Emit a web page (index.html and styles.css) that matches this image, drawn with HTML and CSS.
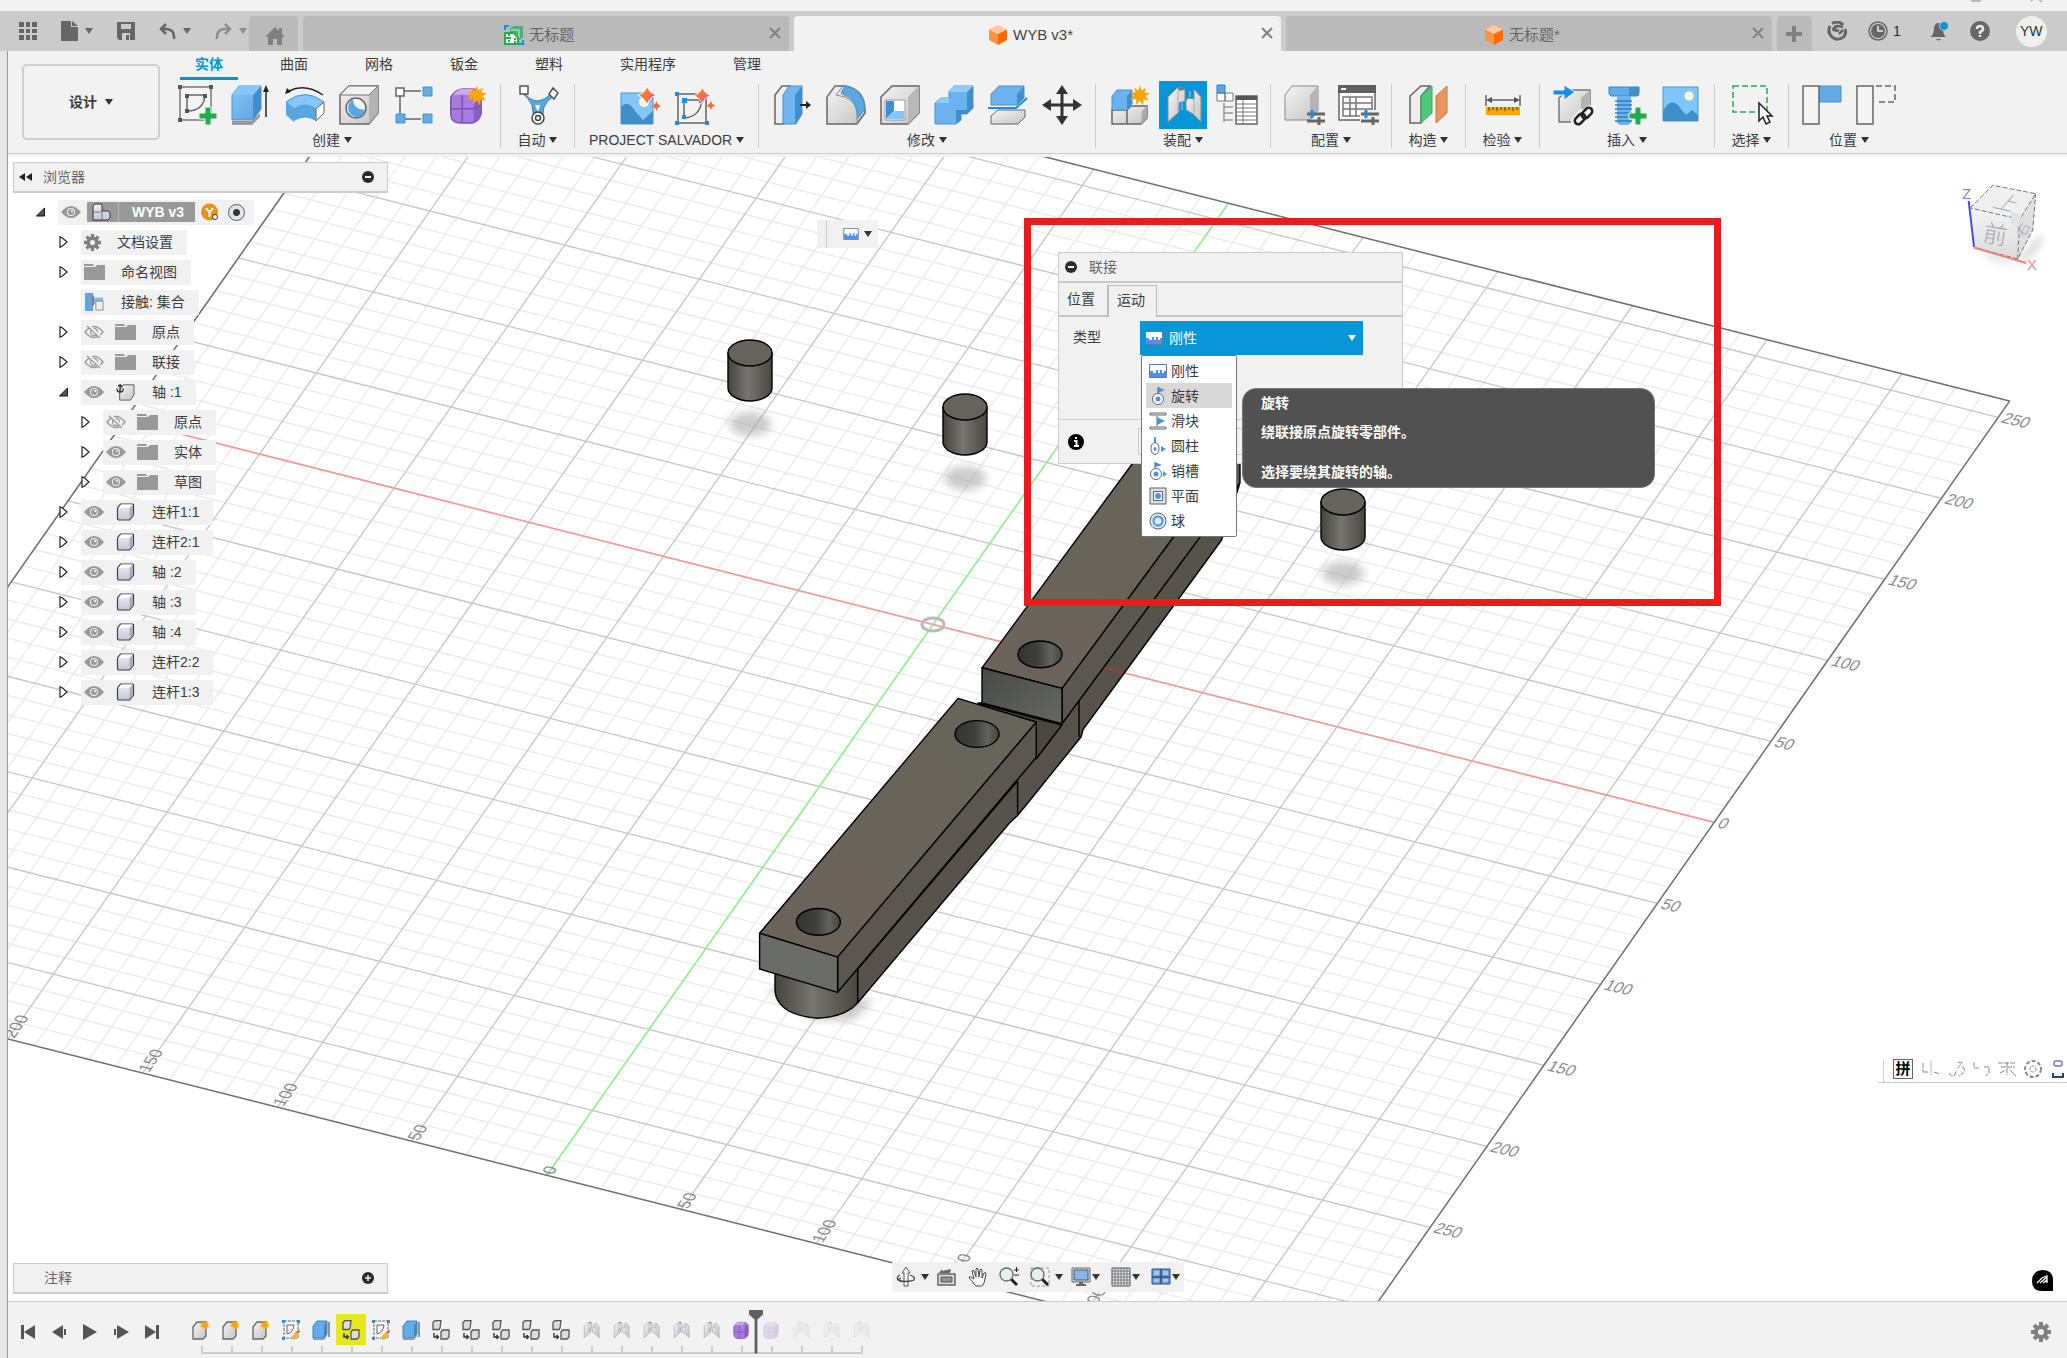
FILE: index.html
```html
<!DOCTYPE html>
<html lang="zh-CN">
<head>
  <meta charset="UTF-8">
  <meta name="viewport" content="width=device-width, initial-scale=1.0">
  <title>WYB v3</title>
  <link rel="stylesheet" href="styles.css">
</head>
<body>

<!-- shared icons -->
<svg class="defs" aria-hidden="true">
  <defs>
    <linearGradient id="gGray" x1="0" y1="0" x2="1" y2="1"><stop offset="0" stop-color="#f4f4f4"/><stop offset="1" stop-color="#c4c4c4"/></linearGradient>
    <linearGradient id="gBlue" x1="0" y1="0" x2="1" y2="1"><stop offset="0" stop-color="#86c6fa"/><stop offset="1" stop-color="#5aa3dd"/></linearGradient>
    <linearGradient id="gStar" x1="0" y1="0" x2="1" y2="1"><stop offset="0" stop-color="#ffa21a"/><stop offset=".5" stop-color="#ff6f42"/><stop offset="1" stop-color="#ff3ec8"/></linearGradient>
    <linearGradient id="gPart" x1="0" y1="0" x2="0" y2="1"><stop offset="0" stop-color="#eef0f5"/><stop offset="1" stop-color="#c3c7d6"/></linearGradient>
    <linearGradient id="gMetal" x1="0" y1="0" x2="1" y2="0"><stop offset="0" stop-color="#45433c"/><stop offset=".45" stop-color="#75766f"/><stop offset="1" stop-color="#4a473e"/></linearGradient>
    <linearGradient id="gHole" x1="0" y1="0" x2="1" y2="0"><stop offset="0" stop-color="#35352f"/><stop offset=".45" stop-color="#3f413c"/><stop offset=".75" stop-color="#62635d"/><stop offset="1" stop-color="#44423b"/></linearGradient>
    <linearGradient id="gTop" x1="0" y1="1" x2="1" y2="0"><stop offset="0" stop-color="#6b635a"/><stop offset="1" stop-color="#66645a"/></linearGradient>
    <linearGradient id="gEnd" x1="0" y1="0" x2="1" y2="1"><stop offset="0" stop-color="#484a46"/><stop offset="1" stop-color="#656762"/></linearGradient>
    <linearGradient id="gCube" x1="0" y1="0" x2="0" y2="1"><stop offset="0" stop-color="#f4f4f4"/><stop offset="1" stop-color="#dadada"/></linearGradient>
    <filter id="soft" x="-50%" y="-50%" width="200%" height="200%"><feGaussianBlur stdDeviation="4"/></filter>
  </defs>

  <symbol id="i-cube" viewBox="0 0 20 20"><path d="M10 0l9 4.500-9 4.500-9-4.500z" fill="#ffc9a0"/><path d="M1 4.500l9 4.500v11l-9-5z" fill="#ff9440"/><path d="M19 4.500L10 9v11l9-5z" fill="#ff6a00"/></symbol>
  <symbol id="i-sheet" viewBox="0 0 20 20"><path d="M1 5V1h4M19 15v4h-4" fill="none" stroke="#1a8de8" stroke-width="2"/><path d="M6 3l4-2h9v12l-4 2H6z" fill="#4fae74"/><path d="M7 5h8v8" fill="none" stroke="#8bd3a5" stroke-width="2"/><path d="M1 8h9l4 5v6H1z" fill="#fff" stroke="#22ad55" stroke-width="2"/><path d="M5 9v8M2 13h6M11 13v5" stroke="#22ad55" stroke-width="2" stroke-dasharray="2 1"/></symbol>
  <symbol id="i-eye" viewBox="0 0 20 14"><path d="M0 7Q10-5 20 7 10 19 0 7z" fill="#999"/><circle cx="10" cy="7" r="4" fill="#f1f1f1"/><circle cx="10" cy="7" r="3" fill="#999"/><circle cx="11" cy="6" r="1" fill="#fff"/></symbol>
  <symbol id="i-eyeoff" viewBox="0 0 20 14"><path d="M1 7Q10-4 19 7 10 18 1 7z" fill="none" stroke="#999" stroke-width="1.300"/><circle cx="10" cy="7" r="3.500" fill="none" stroke="#999" stroke-width="1.300"/><path d="M4 0l13 13" stroke="#f1f1f1" stroke-width="3"/><path d="M3 1l13 12" stroke="#999" stroke-width="1.300"/></symbol>
  <symbol id="i-folder" viewBox="0 0 21 16"><path d="M0 0h9l1 2H0zM0 3h11l2-2h8v15H0z" fill="#999"/></symbol>
  <symbol id="i-part" viewBox="0 0 18 18"><path d="M1 6q0-2 1.500-3L4 1h12l1 .6V12l-4 5H2l-1-1z" fill="url(#gPart)" stroke="#3c4150" stroke-width="1.200"/><path d="M2 5l3-3.500h11L13 5z" fill="#fdfdfe"/><path d="M13 5l3.500-3.500V12L13 16z" fill="#a9adbd"/></symbol>
  <symbol id="i-open" viewBox="0 0 10 10"><path d="M9.500.5v9h-9z" fill="#555" stroke="#000"/></symbol>
  <symbol id="i-closed" viewBox="0 0 9 12"><path d="M1 .8v10.400L3.500 10 8 6 3.500 2z" fill="#fff" stroke="#222" stroke-width="1.200"/></symbol>
  <symbol id="i-gear" viewBox="0 0 20 20"><circle cx="10" cy="10" r="5" fill="none" stroke="#808080" stroke-width="4"/><path d="M10 0v4M10 16v4M0 10h4M16 10h4M3 3l3 3M14 14l3 3M17 3l-3 3M6 14l-3 3" stroke="#808080" stroke-width="4"/></symbol>
  <symbol id="i-minus" viewBox="0 0 12 12"><circle cx="6" cy="6" r="6" fill="#2b2b2b"/><path d="M3 6h6" stroke="#f1f1f1" stroke-width="2"/></symbol>
  <symbol id="i-plus" viewBox="0 0 12 12"><circle cx="6" cy="6" r="6" fill="#2b2b2b"/><path d="M3 6h6M6 3v6" stroke="#f1f1f1" stroke-width="1.500"/></symbol>
  <symbol id="i-burst" viewBox="0 0 20 20"><path d="M10 0l1.800 5L16 2l-1.600 5L20 8l-4.500 2.500L19 15l-5.300-1L13 20l-3-5-4 4 .3-5.500L0 14l4-4-4-3 5.600-.2L4 2l4.400 3z" fill="#f9a602"/></symbol>
  <symbol id="i-spark" viewBox="0 0 30 30"><path d="M13 0q1 8 10 11-9 3-10 11Q11 14 3 11 12 8 13 0z" fill="url(#gStar)" stroke="#fff"/><path d="M23 17q.5 4 5 5.500-4.500 1.500-5 5.500-1-4-5-5.500 4-1.500 5-5.500z" fill="#ff6a3a"/></symbol>
  <symbol id="i-rigid" viewBox="0 0 18 14"><path d="M.5.500h17v13H.5z" fill="#f7f9fc" stroke="#6b7788"/><path d="M1 7h3v2h3V6h2v3h2V6h2v3h2V7h2v6H1z" fill="#4a90f5"/></symbol>
  <symbol id="i-joint" viewBox="0 0 40 40"><path d="M5 12L14 3q6-2 8 2v11l-6 2v9L5 37z" fill="url(#gGray)" stroke="#8a8a8a"/><path d="M15 5v22" stroke="#aaa"/><path d="M38 12l-7-8v10l-6-1-2 3v9l7 4 8 8z" fill="url(#gGray)" stroke="#8a8a8a"/><path d="M31 14v15" stroke="#aaa"/><path d="M19 18v7M27 6v6" stroke="#58b2f0" stroke-width="2"/><ellipse cx="18" cy="4" rx="3" ry="1.500" fill="#777"/></symbol>
  <symbol id="i-copy" viewBox="0 0 18 20"><path d="M1 2.500L3 .7h6L8 8 7 9.500H1zM9 12l1.500-2H17v7l-2 2H9z" fill="#ddd" stroke="#555" stroke-width="1.300"/><path d="M2 13v4h4M4.500 15l2 2-2 2" fill="none" stroke="#333" stroke-width="1.400"/></symbol>
  <symbol id="i-box" viewBox="0 0 18 20"><path d="M1 7l4-5h9v14l-3 3H1z" fill="url(#gGray)" stroke="#666" stroke-width="1.300"/><use href="#i-burst" x="8" y="0" width="10" height="10"/></symbol>
  <symbol id="i-tsketch" viewBox="0 0 18 20"><path d="M2 1h14v17H2z" fill="#f6f6f6" stroke="#666" stroke-dasharray="3 1"/><path d="M5 5h7q-1 8-7 9z" fill="none" stroke="#666"/><path d="M0 0h3v3H0zM15 0h3v3h-3zM0 17h3v3H0z" fill="#2b8fe0"/><path d="M10 19l6-7" stroke="#f7b13a" stroke-width="3.500"/><path d="M16 11l1 1" stroke="#e02020" stroke-width="3"/></symbol>
  <symbol id="i-textrude" viewBox="0 0 18 20"><path d="M1 6l4-5h10v13l-3 4H1z" fill="#62abe6" stroke="#3c86c2"/><path d="M12 6l3-5v13l-3 4z" fill="#3a88c6"/><path d="M1 18h11l3-4v2l-3 4H1z" fill="#999"/><path d="M17 17V2" stroke="#333"/></symbol>
  <symbol id="i-form" viewBox="0 0 40 40"><path d="M4 12Q8 4 16 3h12q9 2 8 12v14q-2 8-9 10H13Q4 38 4 30z" fill="#a97be0" stroke="#7b4fb8" stroke-width="1.500"/><path d="M28 12l8-4v20q-2 8-8 10z" fill="#8a5cc8"/><path d="M6 10Q10 4 16 3h12l-4 7q-9-2-18 0z" fill="#cda8f5"/><path d="M16 10v28M4 24h24l8-4" fill="none" stroke="#7b4fb8" stroke-width="1.500"/></symbol>
</svg>

<div class="titlebar">
  <svg width="2067" height="11" viewBox="0 0 2067 11" aria-hidden="true"><path d="M1972 0v1h8V0M2031 1l3-2M2038-1l4 3" fill="none" stroke="#888"/></svg>
</div>

<header class="tabbar">
  <div class="quick">
    <button class="flat" aria-label="数据面板"><svg width="18" height="18" viewBox="0 0 18 18"><path d="M0 0h5v5H0zM7 0h4v5H7zM13 0h5v5h-5zM0 7h5v4H0zM7 7h4v4H7zM13 7h5v4h-5zM0 13h5v5H0zM7 13h4v5H7zM13 13h5v5h-5z" fill="#666"/></svg></button>
    <button class="flat wide" aria-label="文件"><svg width="17" height="20" viewBox="0 0 17 20"><path d="M0 0h10v6h7v14H0z" fill="#666"/><path d="M11 0l6 5h-6z" fill="#666"/></svg><i class="caret"></i></button>
    <button class="flat" aria-label="保存"><svg width="18" height="18" viewBox="0 0 18 18"><path d="M0 0h18v18H2l-2-2z" fill="#666"/><path d="M4 2h10v5H4zM5 11h8v7H5z" fill="#ccc"/><path d="M9 13h3v5H9z" fill="#666"/></svg></button>
    <button class="flat wide" aria-label="撤消"><svg width="17" height="17" viewBox="0 0 17 17"><path d="M7 1L2 6l5 5M2 6h6q8 1 7 10" fill="none" stroke="#666" stroke-width="2.500"/></svg><i class="caret"></i></button>
    <button class="flat wide faded" aria-label="重做"><svg width="17" height="17" viewBox="0 0 17 17"><path d="M10 1l5 5-5 5M15 6H9Q1 7 2 16" fill="none" stroke="#666" stroke-width="2.500"/></svg><i class="caret"></i></button>
  </div>
  <button class="tab home" aria-label="主页"><svg width="20" height="18" viewBox="0 0 20 18"><path d="M10 0l4 4V1h3v6l3 3h-3v8h-5v-6H8v6H3v-8H0z" fill="#808080"/></svg></button>
  <div class="tab doc"><svg width="20" height="20"><use href="#i-sheet"/></svg><span>无标题</span><button class="close" aria-label="关闭"><svg width="12" height="12" viewBox="0 0 12 12"><path d="M1 1l10 10M11 1L1 11" stroke="#808080" stroke-width="2"/></svg></button></div>
  <div class="tab doc active"><svg width="20" height="20"><use href="#i-cube"/></svg><span>WYB v3*</span><button class="close" aria-label="关闭"><svg width="12" height="12" viewBox="0 0 12 12"><path d="M1 1l10 10M11 1L1 11" stroke="#808080" stroke-width="2"/></svg></button></div>
  <div class="tab doc"><svg width="20" height="20"><use href="#i-cube"/></svg><span>无标题*</span><button class="close" aria-label="关闭"><svg width="12" height="12" viewBox="0 0 12 12"><path d="M1 1l10 10M11 1L1 11" stroke="#808080" stroke-width="2"/></svg></button></div>
  <button class="tab add" aria-label="新建"><svg width="16" height="16" viewBox="0 0 16 16"><path d="M8 0v16M0 8h16" stroke="#808080" stroke-width="4"/></svg></button>
  <div class="account">
    <button class="flat" aria-label="扩展"><svg width="20" height="20" viewBox="0 0 20 20"><path d="M5 2.500Q12-1 16 4M18 8q2 6-3 9-6 3-10-1Q0 11 3 5" fill="none" stroke="#666" stroke-width="3"/><path d="M6 9q1-4 5-4l5 1M8 10l4-1M12 13l4-4M9 6l-3 4" fill="none" stroke="#666" stroke-width="2.500"/></svg></button>
    <button class="flat jobs" aria-label="作业状态"><svg width="20" height="20" viewBox="0 0 20 20"><circle cx="10" cy="10" r="9" fill="none" stroke="#666" stroke-width="1.500"/><circle cx="10" cy="10" r="7" fill="#666"/><path d="M10 5v5h5" fill="none" stroke="#eee" stroke-width="1.500"/></svg><span>1</span></button>
    <button class="flat" aria-label="通知"><svg width="20" height="20" viewBox="0 0 20 20"><path d="M1 16q4-2 4-9 1-5 4-5 4 0 5 5 0 7 3 9zM7 18h5q-2 3-5 0z" fill="#666"/><circle cx="15" cy="5" r="4.500" fill="#0696d7" stroke="#ccc"/></svg></button>
    <button class="flat" aria-label="帮助"><svg width="20" height="20" viewBox="0 0 20 20"><circle cx="10" cy="10" r="10" fill="#666"/><path d="M7 8q0-3 3-3t3 3q0 2-3 3v2M10 14v2" fill="none" stroke="#e8e8e8" stroke-width="2.500"/></svg></button>
    <button class="avatar">YW</button>
  </div>
</header>

<div class="shell">
  <nav class="ribbon">
    <button class="workspace">设计 <i class="caret dark"></i></button>
    <div class="ribbon-main">
      <div class="menu">
        <button class="on">实体</button>
        <button>曲面</button>
        <button>网格</button>
        <button>钣金</button>
        <button>塑料</button>
        <button>实用程序</button>
        <button>管理</button>
      </div>
      <div class="groups">
        <section class="group">
          <div class="tools">
            <button aria-label="草图"><svg viewBox="0 0 40 40"><path d="M3 2h31v33H3z" fill="#f4f4f4" stroke="#777" stroke-width="1.500"/><path d="M10 10h18q-1 16-18 16zM10 10v16" fill="none" stroke="#666" stroke-width="1.500"/><path d="M1 0h4v4H1zM32 0h4v4h-4zM1 33h4v4H1zM8 9h4v4H8zM26 9h4v4h-4zM8 24h4v4H8z" fill="#555"/><path d="M28 22h6v6h6v6h-6v6h-6v-6h-6v-6h6z" fill="#1fae4c" stroke="#f2f2f2"/></svg></button>
            <button aria-label="拉伸"><svg viewBox="0 0 40 40"><path d="M1 36h20l8-8v4l-8 8H1z" fill="#999"/><path d="M1 10L8 1h22v23l-8 11H1z" fill="url(#gBlue)" stroke="#4a94ce"/><path d="M22 10l8-9v23l-8 11z" fill="#3f8fcc"/><path d="M1 10L8 1h22l-8 9z" fill="#86c6fa"/><path d="M35 32V6" stroke="#222" stroke-width="1.500"/><path d="M32 7l3-7 3 7z" fill="#222"/></svg></button>
            <button aria-label="旋转"><svg viewBox="0 0 40 40"><path d="M4 6q16-8 34 4" fill="none" stroke="#222" stroke-width="1.500"/><path d="M0 9l2-6 4 4z" fill="#222"/><path d="M1 17Q20 2 39 17l-8 7Q20 16 9 24z" fill="#86c6fa" stroke="#4a94ce"/><path d="M1 17l8 7v13l-8-7zM9 24q11-8 22 0v12q-11-7-22 0z" fill="#5aa6e0"/><path d="M31 24l8-7v11l-8 8z" fill="#fff" stroke="#666"/></svg></button>
            <button aria-label="孔"><svg viewBox="0 0 40 40"><path d="M1 10L10 1h29v27L30 39H1z" fill="url(#gGray)" stroke="#666" stroke-width="1.500"/><path d="M30 10l9-9v27L30 39z" fill="#b4b4b4"/><path d="M1 10L10 1h29l-9 9z" fill="#f3f3f3" stroke="#777"/><ellipse cx="17" cy="23" rx="10" ry="10" fill="#f2f2f2" stroke="#666" stroke-width="1.500"/><path d="M14 14q0 10 12 11-2 8-9 7-8-2-8-9 1-7 5-9z" fill="#5aa6e0"/></svg></button>
            <button aria-label="阵列"><svg viewBox="0 0 40 40"><path d="M7 6v28M10 6h18M12 34h16" fill="none" stroke="#666" stroke-width="1.500"/><path d="M3 3h8v8H3z" fill="#fff" stroke="#666" stroke-width="1.500"/><path d="M30 2h9v9h-9zM30 29h9v9h-9zM3 29h9v9H3z" fill="#62abe6" stroke="#4a94ce"/></svg></button>
            <button aria-label="创建造型"><svg viewBox="0 0 40 40"><use href="#i-form" width="38" height="40"/><use href="#i-burst" x="20" y="0" width="20" height="21"/></svg></button>
          </div>
          <button class="label">创建 <i class="caret dark"></i></button>
        </section>
        <section class="group">
          <div class="tools">
            <button aria-label="自动建模"><svg viewBox="0 0 40 40"><path d="M7 7q3 8 12 9 9-1 14-8l2 4q-6 3-9 10l-2 12h-8l-2-14Q10 12 5 9z" fill="#5aa6e0" stroke="#357fb8"/><path d="M17 20h5l-2 7z" fill="#fff"/><path d="M2 1h8v8H2zM31 9l4-6 5 5-4 6z" fill="#fff" stroke="#555" stroke-width="1.500"/><circle cx="20" cy="33" r="6" fill="#fff" stroke="#444" stroke-width="1.500"/><circle cx="20" cy="33" r="2.500" fill="none" stroke="#444" stroke-width="1.500"/></svg></button>
          </div>
          <button class="label">自动 <i class="caret dark"></i></button>
        </section>
        <section class="group">
          <div class="tools">
            <button aria-label="图像生成"><svg viewBox="0 0 40 40"><path d="M1 8h32v31H1z" fill="#86c6fa" stroke="#4a94ce"/><circle cx="24" cy="17" r="5" fill="#fffbd0"/><path d="M1 22q7-8 14 4l8 9 10-9v13H1z" fill="#3f8fcc"/><use href="#i-spark" x="15" y="0" width="28" height="28"/></svg></button>
            <button aria-label="草图生成"><svg viewBox="0 0 40 40"><path d="M4 9h28v29H4zM10 15h18q-2 17-18 18z" fill="none" stroke="#666" stroke-width="1.500"/><path d="M1 7h4v4H1zM1 36h4v4H1zM31 36h4v4h-4zM8 13h5v5H8zM25 13h4v5h-4zM8 30h4v4H8z" fill="#1a8de8"/><use href="#i-spark" x="17" y="0" width="26" height="28"/></svg></button>
          </div>
          <button class="label">PROJECT SALVADOR <i class="caret dark"></i></button>
        </section>
        <section class="group">
          <div class="tools">
            <button aria-label="按拉"><svg viewBox="0 0 40 40"><path d="M3 10l7-9h8v30l-6 8H3z" fill="#eee" stroke="#666" stroke-width="1.500"/><path d="M11 10l6-9h13v28l-6 10H11z" fill="#70b6f0" stroke="#4a94ce"/><path d="M23 10l7-9v28l-7 10z" fill="#3f8fcc"/><path d="M28 20h8" stroke="#222" stroke-width="2"/><path d="M34 16l5 4-5 4z" fill="#222"/></svg></button>
            <button aria-label="圆角"><svg viewBox="0 0 40 40"><path d="M1 12L9 1h10q19 3 20 23v4l-8 11H1z" fill="url(#gGray)" stroke="#666" stroke-width="1.500"/><path d="M1 12L9 1h8l-7 9q20 2 21 18v11" fill="none" stroke="#888"/><path d="M16 9q-2-1 3-8 19 3 20 23l-7 9Q31 13 16 9z" fill="#5aa6e0" stroke="#4a94ce"/></svg></button>
            <button aria-label="抽壳"><svg viewBox="0 0 40 40"><path d="M1 12L12 1h27v27L28 39H1z" fill="url(#gGray)" stroke="#666" stroke-width="1.500"/><path d="M28 12L39 1v27L28 39z" fill="#b8b8b8"/><path d="M5 15h20v20H5z" fill="#fff" stroke="#999"/><path d="M6 16h8v10l-8 8z" fill="#3f8fcc"/><path d="M6 34l8-8h10v8z" fill="#86c6fa"/></svg></button>
            <button aria-label="合并"><svg viewBox="0 0 40 40"><path d="M1 18l6-5h8V6l5-5h19v22l-6 6h-6v6l-5 4H1z" fill="#6cb2ee" stroke="#4a94ce"/><path d="M33 7l6-6v22l-6 6h-6v6l-5 4V25h11z" fill="#3f8fcc"/><path d="M14 6l6-5h19l-6 6H14zM1 18l6-5h8v5z" fill="#8fccfb"/></svg></button>
            <button aria-label="分割"><svg viewBox="0 0 40 40"><path d="M3 31l7-6h27v7l-7 7H3z" fill="url(#gGray)" stroke="#666"/><path d="M3 9l8-8h25v12l-7 7H3z" fill="#6cb2ee" stroke="#4a94ce"/><path d="M29 9l7-8v12l-7 7z" fill="#3f8fcc"/><path d="M0 23h28l11-10" fill="none" stroke="#1a8de8" stroke-width="2"/></svg></button>
            <button aria-label="移动"><svg viewBox="0 0 40 40"><path d="M20 4v32M4 20h32" stroke="#333" stroke-width="3"/><path d="M14 9l6-9 6 9zM14 31l6 9 6-9zM9 14l-9 6 9 6zM31 14l9 6-9 6z" fill="#333"/></svg></button>
          </div>
          <button class="label">修改 <i class="caret dark"></i></button>
        </section>
        <section class="group">
          <div class="tools">
            <button aria-label="新建零部件"><svg viewBox="0 0 40 40"><path d="M3 25h15v14H3zM18 25l4-4h16v12l-6 6H18z" fill="url(#gGray)" stroke="#666" stroke-width="1.500"/><path d="M33 26l5-5v12l-6 6z" fill="#aaa"/><path d="M3 11l5-6h15v14l-5 6H3z" fill="#6cb2ee" stroke="#4a94ce"/><path d="M18 11l5-6v14l-5 6z" fill="#3f8fcc"/><use href="#i-burst" x="21" y="0" width="20" height="21"/></svg></button>
            <button class="on" aria-label="联接"><svg viewBox="0 0 40 40"><use href="#i-joint" width="40" height="40"/></svg></button>
            <button aria-label="零部件表"><svg viewBox="0 0 40 40"><path d="M0 8h8v8H0zM8 8h8v8H8z" fill="#fff" stroke="#777"/><path d="M0 0h8v8H0z" fill="#5aa6e0" stroke="#357fb8"/><path d="M7 18v19M7 22h9M7 28h9M7 35h9" fill="none" stroke="#999" stroke-width="1.500"/><path d="M19 11h21v28H19z" fill="#fff" stroke="#666" stroke-width="1.500"/><path d="M19 11h21v4H19z" fill="#555"/><path d="M26 15v24M19 19h21M19 23h21M19 27h21M19 31h21M19 35h21" stroke="#777"/></svg></button>
          </div>
          <button class="label">装配 <i class="caret dark"></i></button>
        </section>
        <section class="group">
          <div class="tools">
            <button aria-label="配置"><svg viewBox="0 0 40 40"><path d="M1 10l7-9h26v25l-8 9H1z" fill="url(#gGray)" stroke="#888"/><path d="M26 10l8-9v25l-8 9z" fill="#b4b4b4"/><path d="M23 29h18M23 36h18M35 32v8" stroke="#666" stroke-width="3"/><path d="M28 25v8" stroke="#1a8de8" stroke-width="3"/></svg></button>
            <button aria-label="配置表"><svg viewBox="0 0 40 40"><path d="M1 1h36v34H1z" fill="#fafafa" stroke="#666" stroke-width="1.500"/><path d="M0 0h38v8H0z" fill="#606060"/><path d="M3 3h5v2H3z" fill="#fff"/><path d="M5 12h29v19H5zM5 18h29M5 24h29M12 12v19M18 12v19" fill="none" stroke="#777" stroke-width="1.500"/><path d="M22 25h20v15H22z" fill="#f2f2f2"/><path d="M23 29h18M23 36h18M35 32v8" stroke="#666" stroke-width="3"/><path d="M28 25v8" stroke="#1a8de8" stroke-width="3"/></svg></button>
          </div>
          <button class="label">配置 <i class="caret dark"></i></button>
        </section>
        <section class="group">
          <div class="tools">
            <button aria-label="构造平面"><svg viewBox="0 0 40 40"><path d="M1 11L12 1h9L12 11v27H1z" fill="#eee" stroke="#666" stroke-width="1.500"/><path d="M12 11L23 1v27L12 38z" fill="#4fc879" stroke="#3ba662"/><path d="M27 11L38 1v27L27 38z" fill="#e89660" stroke="#c67a45"/></svg></button>
          </div>
          <button class="label">构造 <i class="caret dark"></i></button>
        </section>
        <section class="group">
          <div class="tools">
            <button aria-label="测量"><svg viewBox="0 0 40 40"><path d="M3 10v11M37 10v11M6 15h28" stroke="#666" stroke-width="1.500"/><path d="M3 15l6-3v6zM37 15l-6-3v6z" fill="#555"/><path d="M3 22h34v8H3z" fill="#f9a602"/><path d="M6 22v4M10 22v3M14 22v4M18 22v3M22 22v4M26 22v3M30 22v4M34 22v3" stroke="#6b4a00" stroke-width="1.200"/></svg></button>
          </div>
          <button class="label">检验 <i class="caret dark"></i></button>
        </section>
        <section class="group">
          <div class="tools">
            <button aria-label="插入衍生"><svg viewBox="0 0 40 40"><path d="M6 13l8-8h23v24l-8 8H6z" fill="url(#gGray)" stroke="#777" stroke-width="1.500"/><path d="M28 13l9-8v24l-9 8z" fill="#b4b4b4"/><path d="M0 5h11V0l11 7-11 8v-5H0z" fill="#1a8de8" stroke="#f2f2f2"/><path d="M24 37l6-7M32 32l5-6" stroke="#f2f2f2" stroke-width="12" stroke-linecap="round"/><rect x="-6" y="-3.500" width="12" height="7" rx="3.500" transform="translate(27 34) rotate(-45)" fill="none" stroke="#222" stroke-width="2.500"/><rect x="-6" y="-3.500" width="12" height="7" rx="3.500" transform="translate(34 28) rotate(-45)" fill="none" stroke="#222" stroke-width="2.500"/></svg></button>
            <button aria-label="插入紧固件"><svg viewBox="0 0 40 40"><path d="M2 2h30v7l-2 2H4l-2-2z" fill="#62abe6" stroke="#3c86c2"/><path d="M22 2h10v9H22z" fill="#3f8fcc"/><path d="M10 11h14v27l-3 2h-8l-3-2z" fill="#6cb2ee"/><path d="M8 16h17M8 20h17M8 24h17M8 28h17M8 32h17M8 36h17" stroke="#357fb8" stroke-width="1.500"/><path d="M28 22h6v6h6v6h-6v6h-6v-6h-6v-6h6z" fill="#1fae4c" stroke="#f2f2f2"/></svg></button>
            <button aria-label="插入图像"><svg viewBox="0 0 40 40"><path d="M2 2h35v34H2z" fill="#7fc6fb" stroke="#4a94ce"/><circle cx="28" cy="11" r="4.500" fill="#fffbd0"/><path d="M2 26q9-16 18-2l5 6 6-5 6 5v6H2z" fill="#3f8fcc"/></svg></button>
          </div>
          <button class="label">插入 <i class="caret dark"></i></button>
        </section>
        <section class="group">
          <div class="tools">
            <button aria-label="选择"><svg viewBox="0 0 40 40"><path d="M1 1h34v26H1z" fill="none" stroke="#1fae4c" stroke-width="1.500" stroke-dasharray="6 3"/><path d="M27 18v18l4-4 3 7 4-2-3-6h5z" fill="#fff" stroke="#222" stroke-width="1.500"/></svg></button>
          </div>
          <button class="label">选择 <i class="caret dark"></i></button>
        </section>
        <section class="group">
          <div class="tools">
            <button aria-label="捕捉位置"><svg viewBox="0 0 40 40"><path d="M17 1h22v16H17z" fill="#62abe6" stroke="#4a94ce"/><path d="M1 1h16v38H1z" fill="#f4f4f4" stroke="#666" stroke-width="1.500"/></svg></button>
            <button aria-label="还原位置"><svg viewBox="0 0 40 40"><path d="M20 1h19v16H20" fill="none" stroke="#666" stroke-width="1.500" stroke-dasharray="6 3"/><path d="M1 1h16v38H1z" fill="#f4f4f4" stroke="#666" stroke-width="1.500"/></svg></button>
          </div>
          <button class="label">位置 <i class="caret dark"></i></button>
        </section>
      </div>
    </div>
  </nav>

  <main class="viewport">
    <svg class="scene" viewBox="8 157 2059 1144" preserveAspectRatio="xMinYMin slice">
      <g id="grid"></g>
      <ellipse cx="933" cy="624.500" rx="11" ry="6.500" fill="none" stroke="#bbb" stroke-width="3"/>

      <!-- pins -->
      <g id="pins"></g>

      <!-- links -->
      <path d="M764 990l50 30 40 0 20-20z" fill="#999" opacity=".5" filter="url(#soft)"/>
      <g stroke="#000" stroke-width="1.400" stroke-linejoin="round">
        <path d="M980 703L1010 700 1062 640 1239 446V486L1221.600 540 1083 729.500 1081 737 1017.600 815.500 1009.500 823 857.600 1003V969z" fill="#57534a"/>
        <path d="M1104 667.800l19 4.800" stroke="#b03a34"/>
        <path d="M775 970V991.500Q778 1015 817.500 1018.300 845 1017 857.600 1003V965z" fill="url(#gMetal)"/>
        <path d="M857.600 969.300L1017.600 781" fill="none"/>
        <path d="M978 703l84 22-26 34V722l-57-17z" fill="#4b473f"/>
        <path d="M1062 723.600L1199 538" fill="none"/>
        <path d="M1017.600 781v34.500M1079 700v37" fill="none"/>
        <path d="M1062 688.400L1240 446.500V483L1062 723.600z" fill="#5b574e"/>
        <path d="M982 667.800L1145 446.500h95L1062 688.400z" fill="url(#gTop)"/>
        <path d="M982 667.800l80 20.600v35.200L982 703z" fill="url(#gEnd)"/>
        <path d="M958 698.400l78.300 23.700L837.600 957.100l-78-23.800z" fill="url(#gTop)"/>
        <path d="M1036.300 722.100v35.200L837.600 992.300v-35.200z" fill="#5b574e"/>
        <path d="M759.600 933.300l78 23.800v35.200l-78-23.300z" fill="#6a6c67"/>
        <ellipse cx="1040" cy="654.400" rx="22" ry="13.400" fill="url(#gHole)"/>
        <ellipse cx="977" cy="734" rx="22" ry="13.400" fill="url(#gHole)"/>
        <ellipse cx="818.400" cy="921.900" rx="22" ry="13.400" fill="url(#gHole)"/>
      </g>
    </svg>

    <aside class="side">
      <div class="panel-head">
        <svg width="13" height="8" viewBox="0 0 13 8"><path d="M6 0v8L0 4zM13 0v8L7 4z" fill="#222"/></svg>
        <span>浏览器</span>
        <button class="flat end" aria-label="折叠"><svg width="12" height="12"><use href="#i-minus"/></svg></button>
      </div>
      <ul class="tree">
        <li class="root"><svg class="tw"><use href="#i-open"/></svg><div class="cell"><svg class="eye"><use href="#i-eye"/></svg><b class="pill"><svg width="19" height="18" viewBox="0 0 19 18"><path d="M1 3l2-2h6l1 1v6h6l2 2v5l-2 2H1z" fill="url(#gPart)" stroke="#333"/><path d="M1 9h9v8" fill="none" stroke="#777"/></svg><span>WYB v3</span></b><svg width="18" height="18" viewBox="0 0 18 18"><circle cx="8.500" cy="9" r="8.500" fill="#e8901c"/><path d="M5 5l3.500 4.500L12 5M8.500 9v5" fill="none" stroke="#fff" stroke-width="2"/><circle cx="14" cy="14" r="2.500" fill="#fff" stroke="#333"/></svg><input type="radio" name="active" checked aria-label="激活零部件"></div></li>
        <li><svg class="tw"><use href="#i-closed"/></svg><div class="cell"><svg width="17" height="17"><use href="#i-gear"/></svg><span>文档设置</span></div></li>
        <li><svg class="tw"><use href="#i-closed"/></svg><div class="cell"><svg class="ico"><use href="#i-folder"/></svg><span>命名视图</span></div></li>
        <li><svg class="tw"></svg><div class="cell"><svg class="ico tall" viewBox="0 0 21 20"><path d="M0 0h9v20H0z" fill="#5aa6e0"/><path d="M9 3v11" stroke="#e33" stroke-width="1.500"/><path d="M10 5h10v7H10z" fill="#79bdf2"/><path d="M12 9h8v10h-8z" fill="#eee" stroke="#888"/></svg><span>接触: 集合</span></div></li>
        <li><svg class="tw"><use href="#i-closed"/></svg><div class="cell"><svg class="eye"><use href="#i-eyeoff"/></svg><svg class="ico"><use href="#i-folder"/></svg><span>原点</span></div></li>
        <li><svg class="tw"><use href="#i-closed"/></svg><div class="cell"><svg class="eye"><use href="#i-eyeoff"/></svg><svg class="ico"><use href="#i-folder"/></svg><span>联接</span></div></li>
        <li><svg class="tw"><use href="#i-open"/></svg><div class="cell"><svg class="eye"><use href="#i-eye"/></svg><svg class="ico tall" viewBox="0 0 21 20"><path d="M4 8l4-6h12v11l-4 6H4z" fill="url(#gGray)" stroke="#555"/><path d="M4.500 1v9M1 6q0 4 3.500 4T8 6M2 3h5" fill="none" stroke="#333" stroke-width="1.500"/></svg><span>轴 :1</span></div></li>
        <li class="sub"><svg class="tw"><use href="#i-closed"/></svg><div class="cell"><svg class="eye"><use href="#i-eyeoff"/></svg><svg class="ico"><use href="#i-folder"/></svg><span>原点</span></div></li>
        <li class="sub"><svg class="tw"><use href="#i-closed"/></svg><div class="cell"><svg class="eye"><use href="#i-eye"/></svg><svg class="ico"><use href="#i-folder"/></svg><span>实体</span></div></li>
        <li class="sub"><svg class="tw"><use href="#i-closed"/></svg><div class="cell"><svg class="eye"><use href="#i-eye"/></svg><svg class="ico"><use href="#i-folder"/></svg><span>草图</span></div></li>
        <li><svg class="tw"><use href="#i-closed"/></svg><div class="cell"><svg class="eye"><use href="#i-eye"/></svg><svg class="ico tall"><use href="#i-part"/></svg><span>连杆1:1</span></div></li>
        <li><svg class="tw"><use href="#i-closed"/></svg><div class="cell"><svg class="eye"><use href="#i-eye"/></svg><svg class="ico tall"><use href="#i-part"/></svg><span>连杆2:1</span></div></li>
        <li><svg class="tw"><use href="#i-closed"/></svg><div class="cell"><svg class="eye"><use href="#i-eye"/></svg><svg class="ico tall"><use href="#i-part"/></svg><span>轴 :2</span></div></li>
        <li><svg class="tw"><use href="#i-closed"/></svg><div class="cell"><svg class="eye"><use href="#i-eye"/></svg><svg class="ico tall"><use href="#i-part"/></svg><span>轴 :3</span></div></li>
        <li><svg class="tw"><use href="#i-closed"/></svg><div class="cell"><svg class="eye"><use href="#i-eye"/></svg><svg class="ico tall"><use href="#i-part"/></svg><span>轴 :4</span></div></li>
        <li><svg class="tw"><use href="#i-closed"/></svg><div class="cell"><svg class="eye"><use href="#i-eye"/></svg><svg class="ico tall"><use href="#i-part"/></svg><span>连杆2:2</span></div></li>
        <li><svg class="tw"><use href="#i-closed"/></svg><div class="cell"><svg class="eye"><use href="#i-eye"/></svg><svg class="ico tall"><use href="#i-part"/></svg><span>连杆1:3</span></div></li>
      </ul>
      <div class="panel-head comments">
        <span>注释</span>
        <button class="flat end" aria-label="添加注释"><svg width="12" height="12"><use href="#i-plus"/></svg></button>
      </div>
    </aside>

    <div class="mini">
      <button class="flat" aria-label="刚性"><svg width="16" height="12"><use href="#i-rigid"/></svg><i class="caret dark"></i></button>
    </div>

    <!-- joint dialog -->
    <section class="dialog">
      <h2><svg width="12" height="12"><use href="#i-minus"/></svg>联接</h2>
      <div class="dialog-tabs"><button>位置</button><button class="on">运动</button></div>
      <div class="field">
        <label for="jointType">类型</label>
        <div class="picker">
          <svg width="18" height="14"><use href="#i-rigid"/></svg>
          <select id="jointType"><option>刚性</option><option>旋转</option><option>滑块</option><option>圆柱</option><option>销槽</option><option>平面</option><option>球</option></select>
          <i class="caret"></i>
          <div class="options">
            <button><svg viewBox="0 0 18 18"><use href="#i-rigid" y="2" width="18" height="14"/></svg>刚性</button>
            <button class="hover"><svg viewBox="0 0 18 18"><path d="M9 0l7 3-7 3z" fill="#4a90f5"/><path d="M9 0v7" stroke="#567"/><circle cx="9" cy="12" r="5.500" fill="#fff" stroke="#567"/><circle cx="9" cy="12" r="2.500" fill="#4a90f5"/></svg>旋转</button>
            <button><svg viewBox="0 0 18 18"><path d="M1 1h16v2H1zM1 15h16v2H1z" fill="#eee" stroke="#667"/><path d="M8 4v10" stroke="#567"/><path d="M8 5l8 4-8 4z" fill="#4a90f5"/></svg>滑块</button>
            <button><svg viewBox="0 0 18 18"><path d="M6 0v6" stroke="#4a90f5" stroke-width="2"/><ellipse cx="6" cy="11.500" rx="4" ry="6" fill="#fff" stroke="#567"/><ellipse cx="6" cy="12" rx="1.500" ry="2" fill="#4a90f5"/><path d="M12 9l5 3-5 3z" fill="#4a90f5"/></svg>圆柱</button>
            <button><svg viewBox="0 0 18 18"><path d="M6 0l7 3-7 2z" fill="#4a90f5"/><path d="M6 0v6" stroke="#567"/><circle cx="7" cy="12" r="5.500" fill="#fff" stroke="#567"/><circle cx="7" cy="12" r="2.500" fill="#4a90f5"/><path d="M14 9l4 3-4 3z" fill="#4a90f5"/></svg>销槽</button>
            <button><svg viewBox="0 0 18 18"><path d="M1 1h16v16H1z" fill="#ddd" stroke="#567"/><path d="M4.500 4.500h9v9h-9z" fill="#fff" stroke="#567"/><circle cx="9" cy="9" r="3" fill="#4a90f5"/></svg>平面</button>
            <button><svg viewBox="0 0 18 18"><circle cx="9" cy="9" r="8" fill="#e4e8ee" stroke="#567"/><circle cx="9" cy="9" r="4.500" fill="#dfeafc" stroke="#4a90f5" stroke-width="2"/></svg>球</button>
          </div>
        </div>
      </div>
      <footer><svg width="16" height="16" viewBox="0 0 16 16"><circle cx="8" cy="8" r="8" fill="#000"/><path d="M8 3v2M6 7h2.500v5M6 12h5" fill="none" stroke="#fff" stroke-width="2"/></svg><span class="ghost"></span></footer>
    </section>

    <div class="tooltip" role="tooltip">
      <p>旋转</p>
      <p>绕联接原点旋转零部件。</p>
      <p>选择要绕其旋转的轴。</p>
    </div>

    <div class="callout"></div>

    <svg class="viewcube" viewBox="1960 175 90 105" width="90" height="105">
      <path d="M1976 248l42 14 20-26 6 4-20 24-30-4z" fill="#999" opacity=".45" filter="url(#soft)"/>
      <path d="M1970.300 208l22.400-22.700 43 8.400-16 25.600z" fill="#efefef"/>
      <path d="M1970.300 208l49.400 11.300L2017.700 259 1974 247.300z" fill="url(#gCube)"/>
      <path d="M2019.700 219.300l16-25.600-3 36.300-15 29z" fill="#e0e0e0"/>
      <path d="M1970.300 208l22.400-22.700 43 8.400-16 25.600zM2019.700 219.300L2017.700 259l15-29 3-36.300M2017.700 259l-43.700-11.700" fill="none" stroke="#777" stroke-dasharray="5 2"/>
      <path d="M2011 212l9 2v12l-9-2z" fill="#dfe2e6"/>
      <path d="M1968.700 201l5.300 46" stroke="#4a4ae0" stroke-width="2"/>
      <path d="M1974 247.500l52 15.500" stroke="#f08080" stroke-width="2"/>
      <text x="1962" y="199" class="axis-z">Z</text>
      <text x="2027" y="270" class="axis-x">X</text>
      <text class="face" transform="translate(1992 207) rotate(13) skewX(-28)">上</text>
      <text class="face big" transform="translate(1982 241) rotate(10)">前</text>
      <text class="face small" transform="translate(2024 238) rotate(-62)">右</text>
    </svg>

    <div class="ime">
      <span>拼</span>
      <svg viewBox="0 0 146 20" width="146" height="20"><path d="M2 4v9M2 13h6M13 13l6 2M28 14q1 3 5 3l3-6M37 3l4 1-5 6M41 8q5 2 1 6l-4 3M53 3v6h6M63 8h5v6l-3 3M77 4h18M80 8h14M86 3v13M79 14l6-3M89 11l6 6" fill="none" stroke="#888" stroke-dasharray="5 1"/><circle cx="112" cy="10" r="3" fill="none" stroke="#888" stroke-dasharray="3 1"/><circle cx="112" cy="10" r="8" fill="none" stroke="#888" stroke-width="2" stroke-dasharray="4 2"/><path d="M10 1v16" stroke="#ddd" stroke-width="2"/><rect x="133" y="2" width="8" height="5" rx="2" fill="none" stroke="#77a" stroke-width="1.500"/><path d="M132 14v4h10v-4" fill="none" stroke="#246" stroke-width="2"/></svg>
    </div>

    <div class="navbar">
      <button class="flat spread" aria-label="动态观察"><svg viewBox="0 0 20 20"><path d="M8 19V6H6l4-6 4 6h-2v13z" fill="#fff" stroke="#555"/><path d="M4 8q-4 2-2 5 8 3 16 0 2-3-4-5M5 11l-3 2 4 2" fill="none" stroke="#444" stroke-width="1.300"/></svg><i class="caret dark"></i></button>
      <button class="flat" aria-label="观察方向"><svg viewBox="0 0 20 20"><path d="M1 7h17v11H1z" fill="#ddd" stroke="#666" stroke-width="1.500"/><path d="M4 10h11v5H4z" fill="#8a94a2" stroke="#555"/><path d="M2 6l3-4v2l9-2-1 4z" fill="#666"/></svg></button>
      <button class="flat" aria-label="平移"><svg viewBox="0 0 20 20"><path d="M6 17Q4 13 1 11q0-2 2-1l3 2L4 4q1-2 2 0l2 6L8 2q1-2 2 0l1 8 1-7q1-2 2 0v8l2-5q2-1 2 1l-2 9q-1 3-3 3H8z" fill="#fff" stroke="#444"/></svg></button>
      <button class="flat" aria-label="缩放"><svg viewBox="0 0 20 20"><path d="M12 12l6 6" stroke="#222" stroke-width="3"/><circle cx="7.500" cy="7.500" r="6.500" fill="#e2f0f0" stroke="#666" stroke-width="1.300"/><path d="M15 3h5M17.500 0v5M15 8h5" stroke="#222"/></svg></button>
      <button class="flat spread" aria-label="缩放窗口"><svg viewBox="0 0 20 20"><path d="M1 1h18v18H1z" fill="none" stroke="#999" stroke-dasharray="3 2"/><path d="M12 12l6 6" stroke="#222" stroke-width="3"/><circle cx="7.500" cy="7.500" r="6.500" fill="#e2f0f0" stroke="#666" stroke-width="1.300"/></svg><i class="caret dark"></i></button>
      <button class="flat" aria-label="显示设置"><svg viewBox="0 0 20 20"><path d="M1 1h18v14H1z" fill="#ddd" stroke="#666"/><path d="M3 3h14v10H3z" fill="#8cb4e6" stroke="#36588f"/><path d="M8 15h4v2h3v2H5v-2h3z" fill="#666"/></svg><i class="caret dark"></i></button>
      <button class="flat" aria-label="栅格和捕捉"><svg viewBox="0 0 20 20"><path d="M1 1h18v18H1z" fill="#dfe3ea" stroke="#555"/><path d="M4 1v18M7 1v18M10 1v18M13 1v18M16 1v18M1 4h18M1 7h18M1 10h18M1 13h18M1 16h18" stroke="#666" stroke-width=".8"/></svg><i class="caret dark"></i></button>
      <button class="flat" aria-label="视口"><svg viewBox="0 0 20 20"><path d="M1 2h18v15H1z" fill="#6f9fd4" stroke="#2c5283"/><path d="M10 2v15M1 10h18" stroke="#2c5283" stroke-width="1.500"/><path d="M3 4h5v4H3zM12 4h5v4h-5zM3 12h5v3H3zM12 12h5v3h-5z" fill="#a4c4ea"/></svg><i class="caret dark"></i></button>
    </div>

    <svg class="assist" viewBox="0 0 21 21" width="21" height="21"><path d="M10 0q11 0 11 10v11H10Q0 21 0 11T10 0z" fill="#000"/><path d="M5 13l5-5 5-2v7M8 13l7-6M11 13l4-3" fill="none" stroke="#fff" stroke-width="1.300"/></svg>
  </main>

  <footer class="timeline">
    <div class="play">
      <button class="flat" aria-label="开头"><svg viewBox="0 0 16 16"><path d="M1 1h3v14H1zM15 1v14L4 8z" fill="#555"/></svg></button>
      <button class="flat" aria-label="后退"><svg viewBox="0 0 16 16"><path d="M12 1v14L1 8zM13 5h2v6h-2z" fill="#555"/></svg></button>
      <button class="flat" aria-label="播放"><svg viewBox="0 0 16 16"><path d="M1 0v16l14-8z" fill="#555"/></svg></button>
      <button class="flat" aria-label="前进"><svg viewBox="0 0 16 16"><path d="M4 1v14l12-7zM1 5h2v6H1z" fill="#555"/></svg></button>
      <button class="flat" aria-label="结尾"><svg viewBox="0 0 16 16"><path d="M12 1h3v14h-3zM1 1v14l11-7z" fill="#555"/></svg></button>
    </div>
    <div class="track">
      <button><svg><use href="#i-box"/></svg></button>
      <button><svg><use href="#i-box"/></svg></button>
      <button><svg><use href="#i-box"/></svg></button>
      <button><svg><use href="#i-tsketch"/></svg></button>
      <button><svg><use href="#i-textrude"/></svg></button>
      <button class="marked"><svg><use href="#i-copy"/></svg></button>
      <button><svg><use href="#i-tsketch"/></svg></button>
      <button><svg><use href="#i-textrude"/></svg></button>
      <button><svg><use href="#i-copy"/></svg></button>
      <button><svg><use href="#i-copy"/></svg></button>
      <button><svg><use href="#i-copy"/></svg></button>
      <button><svg><use href="#i-copy"/></svg></button>
      <button><svg><use href="#i-copy"/></svg></button>
      <button><svg><use href="#i-joint"/></svg></button>
      <button><svg><use href="#i-joint"/></svg></button>
      <button><svg><use href="#i-joint"/></svg></button>
      <button><svg><use href="#i-joint"/></svg></button>
      <button><svg><use href="#i-joint"/></svg></button>
      <button class="current"><svg><use href="#i-form"/></svg></button>
      <button class="later"><svg><use href="#i-form"/></svg></button>
      <button class="later"><svg><use href="#i-joint"/></svg></button>
      <button class="later"><svg><use href="#i-joint"/></svg></button>
      <button class="later"><svg><use href="#i-joint"/></svg></button>
    </div>
    <button class="flat end settings" aria-label="设置"><svg width="20" height="20"><use href="#i-gear"/></svg></button>
  </footer>
</div>

<script src="scene.js"></script>
</body>
</html>
```

FILE: styles.css
```css
* {
  box-sizing: border-box;
}
body {
  margin: 0;
  min-height: 100vh;
  display: flex;
  flex-direction: column;
  font-family: "Liberation Sans", "Noto Sans CJK SC", sans-serif;
  font-size: 14px;
  line-height: 20px;
  color: #3c3c3c;
  background: #f2f2f2;
  overflow: hidden;
}
button {
  font: inherit;
  color: inherit;
  background: none;
  border: 0;
  padding: 0;
}
svg {
  display: block;
  flex: none;
}
.defs {
  position: absolute;
  width: 0;
  height: 0;
}
.flat {
  display: flex;
  align-items: center;
  gap: 5px;
}
.end {
  margin-left: auto;
}
.caret {
  display: inline-block;
  border: 4px solid transparent;
  border-top: 6px solid #666;
  border-bottom: 0;
}
.caret.dark {
  border-top-color: #333;
}

/* top bars */
.titlebar {
  height: 11px;
  overflow: hidden;
}
.tabbar {
  display: flex;
  align-items: flex-end;
  gap: 5px;
  height: 40px;
  background: #cbcbcb;
}
.quick {
  display: flex;
  align-items: center;
  align-self: center;
  gap: 24px;
  width: 244px;
  padding-left: 19px;
}
.quick .wide {
  gap: 7px;
}
.faded {
  opacity: 0.6;
}
.tab {
  display: flex;
  align-items: center;
  justify-content: center;
  height: 35px;
  background: #bababa;
  border-radius: 4px 4px 0 0;
}
.home {
  width: 49px;
  padding: 4px 0 0 3px;
}
.doc {
  position: relative;
  flex: 1;
  gap: 5px;
  padding-top: 2px;
  padding-right: 14px;
  font-size: 15px;
  color: #666;
}
.doc.active {
  background: #f2f2f2;
  color: #444;
}
.close {
  position: absolute;
  right: 8px;
  top: 11px;
}
.add {
  width: 35px;
}
.account {
  display: flex;
  align-items: center;
  align-self: center;
  gap: 21px;
  width: 250px;
  padding-left: 10px;
}
.jobs {
  margin-right: 7px;
  color: #1c2a44;
}
.avatar {
  width: 31px;
  height: 31px;
  margin-left: 5px;
  border-radius: 50%;
  background: #efefef;
  color: #333;
}

/* ribbon */
.shell {
  flex: 1;
  display: flex;
  flex-direction: column;
  border-left: 7px solid #e6e6e6;
  box-shadow: inset 1px 0 #999;
  padding-left: 1px;
}
.ribbon {
  display: flex;
  gap: 4px;
  padding: 0 0 5px 14px;
  border-bottom: 1px solid #ccc;
  margin-bottom: 3px;
}
.workspace {
  width: 138px;
  height: 76px;
  margin-top: 13px;
  border: 2px solid #d0d0d0;
  border-radius: 5px;
  font-weight: bold;
}
.workspace .caret {
  margin: 0 0 2px 4px;
}
.label .caret {
  margin-bottom: 2px;
}
.menu {
  display: flex;
  gap: 27px;
  padding-left: 16px;
}
.menu button {
  padding: 1px 15px 0;
  line-height: 25px;
  border-bottom: 3px solid transparent;
}
.menu .on {
  color: #0696d7;
  font-weight: bold;
  border-color: #0696d7;
}
.groups {
  display: flex;
  margin-top: 4px;
}
.group {
  min-width: 74px;
  height: 64px;
  padding: 1px 13px 0;
  border-right: 1px solid #ccc;
  text-align: center;
}
.group:last-child {
  border: 0;
}
.tools {
  display: flex;
  justify-content: center;
  gap: 14px;
}
.tools svg {
  width: 40px;
  height: 40px;
  overflow: visible;
}
.tools .on {
  background: #0696d7;
  box-shadow: 0 0 0 4px #0696d7;
}
.label {
  margin-top: 7px;
  padding: 0 1px;
  line-height: 16px;
  white-space: nowrap;
}

/* viewport */
.viewport {
  position: relative;
  flex: 1;
  display: flex;
  padding: 5px 5px 7px;
  background: #fff;
  overflow: hidden;
}
.scene {
  position: absolute;
  left: 0;
  top: 0;
  width: 100%;
  height: 100%;
}
.scene text {
  font-size: 16px;
  fill: #8a8a8a;
}
.side {
  position: relative;
  display: flex;
  flex-direction: column;
  width: 375px;
}
.panel-head {
  display: flex;
  align-items: center;
  gap: 11px;
  height: 31px;
  padding: 0 13px 0 5px;
  background: #f1f1f1;
  border: 1px solid #ccc;
  border-bottom-width: 2px;
  color: #666;
}
.comments {
  margin-top: auto;
  padding-left: 30px;
}
.tree {
  list-style: none;
  margin: 4px 0 0;
  padding: 0;
}
.tree li {
  display: flex;
  align-items: center;
  gap: 13px;
  height: 30px;
  padding-left: 46px;
}
.tree .root {
  padding-left: 23px;
}
.tree .sub {
  padding-left: 68px;
}
.tw {
  width: 9px;
  height: 12px;
}
.cell {
  display: flex;
  align-items: center;
  height: 25px;
  gap: 11px;
  padding: 0 14px 0 3px;
  background: #f1f1f1;
}
.cell span {
  margin-left: 5px;
}
.root .cell {
  gap: 6px;
  padding-right: 9px;
}
.eye {
  width: 20px;
  height: 14px;
}
.ico {
  width: 21px;
  height: 16px;
}
.ico.tall {
  height: 18px;
}
.pill {
  display: flex;
  align-items: center;
  gap: 16px;
  width: 108px;
  height: 20px;
  padding-left: 5px;
  background: linear-gradient(90deg, #999 31px, #b4b4b4 31px, #b4b4b4 32px, #999 32px);
  color: #fff;
}
.cell input {
  appearance: none;
  width: 17px;
  height: 17px;
  margin: 0 0 0 3px;
  border: 1px solid #556;
  border-radius: 50%;
  background: radial-gradient(circle, #333 3px, #dfe3ea 4px);
}
.mini {
  position: absolute;
  left: 809px;
  top: 63px;
  height: 28px;
  padding: 0 6px 0 26px;
  display: flex;
  align-items: center;
  background: linear-gradient(90deg, #f1f1f1 9px, #ccc 9px, #ccc 10px, #f1f1f1 10px);
}

/* joint dialog */
.dialog {
  position: absolute;
  left: 1050px;
  top: 95px;
  width: 345px;
  background: #f1f1f1;
  border: 1px solid #ccc;
}
.dialog h2 {
  display: flex;
  align-items: center;
  gap: 12px;
  height: 30px;
  margin: 0;
  padding-left: 6px;
  border-bottom: 2px solid #c8c8c8;
  font-size: 14px;
  font-weight: normal;
  color: #666;
}
.dialog-tabs {
  display: flex;
  height: 34px;
  padding-top: 2px;
  box-shadow: inset 0 -2px #c4c4c4;
}
.dialog-tabs button {
  width: 48px;
  padding: 0 4px 4px 0;
}
.dialog-tabs .on {
  width: 50px;
  padding-right: 3px;
  background: #f1f1f1;
  border: 1px solid #bbb;
  border-left-width: 2px;
  border-bottom: 0;
}
.field {
  display: flex;
  align-items: flex-start;
  height: 102px;
  padding-top: 4px;
}
.field label {
  width: 81px;
  padding-left: 14px;
  line-height: 33px;
}
.picker {
  position: relative;
  display: flex;
  align-items: center;
  width: 223px;
  height: 34px;
  padding: 0 7px 0 5px;
  background: #0696d7;
}
.picker select {
  flex: 1;
  appearance: none;
  border: 0;
  padding: 0 0 0 6px;
  background: none;
  font: inherit;
  color: #fff;
}
.picker > .caret {
  border-top-color: #fff;
}
.options {
  position: absolute;
  left: 1px;
  top: 34px;
  z-index: 3;
  width: 96px;
  padding: 2px 4px 3px;
  background: #fff;
  border: 1px solid #777;
  border-radius: 2px;
}
.options button {
  display: flex;
  align-items: center;
  gap: 4px;
  width: 100%;
  height: 25px;
  padding-left: 3px;
}
.options svg {
  width: 18px;
  height: 18px;
}
.options .hover {
  background: #d8d8d8;
}
.dialog footer {
  display: flex;
  align-items: center;
  gap: 54px;
  height: 44px;
  padding-left: 9px;
  border-top: 1px solid #ccc;
}
.ghost {
  width: 180px;
  height: 27px;
  border: 1px solid #ccc;
}
.tooltip {
  position: absolute;
  left: 1234px;
  top: 231px;
  width: 413px;
  height: 100px;
  padding: 4px 18px;
  background: #515151;
  border: 1px solid #777;
  border-radius: 14px;
  color: #fff;
  font-weight: bold;
}
.tooltip p {
  margin: 0 0 9px;
}
.tooltip p + p {
  margin-bottom: 20px;
}
.callout {
  position: absolute;
  left: 1016px;
  top: 61px;
  width: 697px;
  height: 388px;
  border: 7px solid #e81c1c;
}
.viewcube {
  position: absolute;
  right: 17px;
  top: 18px;
}
.axis-z {
  font-size: 15px;
  fill: #8080f0;
}
.axis-x {
  font-size: 15px;
  fill: #f08c8c;
}
.face {
  font-size: 20px;
  font-weight: 300;
  fill: #a4a8ac;
}
.face.big {
  font-size: 24px;
}
.face.small {
  font-size: 14px;
}
.ime {
  position: absolute;
  right: 0;
  bottom: 218px;
  display: flex;
  gap: 8px;
  padding: 0 0 3px 15px;
  border-bottom: 1px solid #ccc;
  background: linear-gradient(90deg, #fff 5px, #ccc 5px, #ccc 6px, #fff 6px);
}
.ime span {
  width: 20px;
  height: 20px;
  border: 1px solid #666;
  line-height: 18px;
  text-align: center;
  font-size: 15px;
  font-weight: bold;
  color: #000;
}
.navbar {
  position: absolute;
  left: 50%;
  bottom: 9px;
  transform: translateX(-50%);
  display: flex;
  align-items: center;
  gap: 12px;
  height: 30px;
  padding: 0 5px 0 4px;
  background: #f1f1f1;
}
.navbar svg {
  width: 20px;
  height: 20px;
}
.navbar .flat {
  gap: 1px;
  margin-right: -1px;
}
.navbar .spread {
  gap: 5px;
  margin-right: -4px;
}
.assist {
  position: absolute;
  right: 14px;
  bottom: 10px;
}

/* timeline */
.timeline {
  display: flex;
  align-items: center;
  height: 57px;
  padding: 3px 16px 0 12px;
  border-top: 1px solid #ccc;
}
.play {
  display: flex;
  gap: 15px;
  width: 166px;
}
.play svg {
  width: 16px;
  height: 16px;
}
.track {
  display: flex;
  padding-top: 4px;
}
.track button {
  position: relative;
  display: flex;
  justify-content: center;
  width: 30px;
  height: 40px;
  padding-top: 6px;
  border-bottom: 2px solid #ccc;
}
.track button::after {
  content: "";
  position: absolute;
  left: 15px;
  bottom: 0;
  width: 2px;
  height: 6px;
  background: #ccc;
}
.track button:first-child {
  border-image: linear-gradient(90deg, transparent 50%, #ccc 50%) 1;
  border-width: 0 0 2px;
}
.track button:last-child {
  border-image: linear-gradient(90deg, #ccc 55%, transparent 55%) 1;
  border-width: 0 0 2px;
}
.track svg {
  width: 18px;
  height: 20px;
}
.track .marked {
  background: linear-gradient(#e6e81f 31px, transparent 31px);
}
.track .later svg {
  opacity: 0.25;
}
.track .current::before {
  content: "";
  position: absolute;
  left: 23px;
  top: -4px;
  z-index: 1;
  width: 14px;
  height: 44px;
  background: #606060;
  clip-path: polygon(0 0, 100% 0, 100% 5px, 60% 10px, 60% 100%, 40% 100%, 40% 10px, 0 5px);
}
```

FILE: scene.js
```js
const NS = 'http://www.w3.org/2000/svg';
const grid = document.getElementById('grid');
const pins = document.getElementById('pins');

// ground plane: 50 mm steps along x and y in screen units
const origin = [933, 624.5];
const U = [134.7, 34.1];
const V = [56.8, -81];
const range = { x0: -300, x1: 290, y0: -340, y1: 260 };

function project(x, y) {
  return [
    origin[0] + (x * U[0] + y * V[0]) / 50,
    origin[1] + (x * U[1] + y * V[1]) / 50
  ];
}

function add(parent, tag, attrs, text) {
  const el = document.createElementNS(NS, tag);
  for (const k in attrs) el.setAttribute(k, attrs[k]);
  if (text !== undefined) el.textContent = text;
  parent.appendChild(el);
}

function line(a, b, color, width) {
  const p = project(a[0], a[1]);
  const q = project(b[0], b[1]);
  add(grid, 'line', { x1: p[0], y1: p[1], x2: q[0], y2: q[1], stroke: color, 'stroke-width': width });
}

function drawLines(major) {
  for (let x = range.x0; x <= range.x1; x += 10) {
    if ((x % 50 === 0) === major) line([x, range.y0], [x, range.y1], major ? '#c6c6c6' : '#eaeaea', 1.3);
  }
  for (let y = range.y0; y <= range.y1; y += 10) {
    if ((y % 50 === 0) === major) line([range.x0, y], [range.x1, y], major ? '#c6c6c6' : '#eaeaea', 1.3);
  }
}

drawLines(false);
drawLines(true);

// axes and border
line([range.x0, 0], [range.x1, 0], '#ff9494', 1.5);
line([0, range.y0], [0, range.y1], '#8df58d', 1.5);
line([range.x0, range.y0], [range.x0, range.y1], '#707070', 1.5);
line([range.x1, range.y0], [range.x1, range.y1], '#707070', 1.5);
line([range.x0, range.y0], [range.x1, range.y0], '#707070', 1.5);
line([range.x0, range.y1], [range.x1, range.y1], '#707070', 1.5);

// ruler numbers
for (let y = -250; y <= 250; y += 50) {
  const p = project(range.x1, y);
  add(grid, 'text', { transform: `translate(${p[0] + 2} ${p[1] + 5}) rotate(13) skewX(-20)` }, Math.abs(y));
}
for (let x = -200; x <= 200; x += 50) {
  const p = project(x, range.y0);
  add(grid, 'text', { transform: `translate(${p[0] + 6} ${p[1]}) rotate(-55) skewX(20)` }, Math.abs(x));
}

for (const [x, y] of [[750, 353], [965, 407], [1343, 502]]) {
  add(pins, 'ellipse', { cx: x, cy: y + 71, rx: 21, ry: 12, fill: '#999', opacity: 0.5, filter: 'url(#soft)' });
  add(pins, 'path', { d: `M${x - 22} ${y}v35a22 13 0 0 0 44 0v-35z`, fill: 'url(#gMetal)', stroke: '#000', 'stroke-width': 1.4 });
  add(pins, 'ellipse', { cx: x, cy: y, rx: 22, ry: 13, fill: '#66635a', stroke: '#000', 'stroke-width': 1.4 });
}
```
